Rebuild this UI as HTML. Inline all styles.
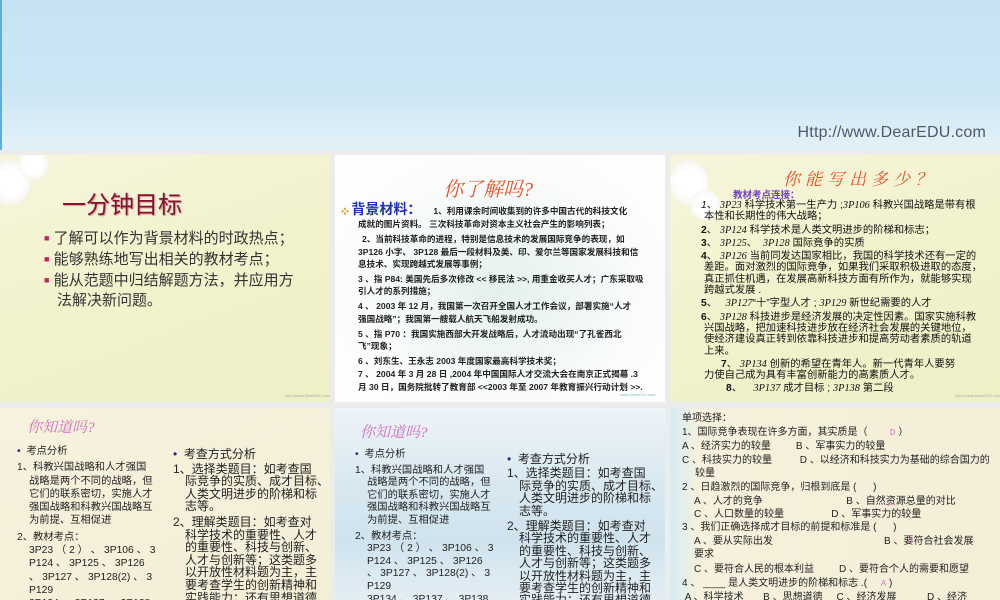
<!DOCTYPE html>
<html><head><meta charset="utf-8"><style>
*{margin:0;padding:0;box-sizing:border-box}
body{width:1000px;height:600px;overflow:hidden;background:#ececec;font-family:"Liberation Sans","Noto Sans CJK SC",sans-serif;position:relative}
.top{position:absolute;left:0;top:0;width:1000px;height:150px;background:linear-gradient(180deg,#c7e3f3 0%,#cce6f4 60%,#e3f1f9 100%);border-left:2px solid #5aaee0}
.url{position:absolute;right:14px;top:124px;font-size:16px;color:#4a5a6a;letter-spacing:0.2px}
.s{position:absolute;overflow:hidden}
.p{position:absolute;white-space:nowrap;color:#222}
.hand{font-family:"Liberation Serif","Noto Serif CJK SC",serif;font-style:italic}
.sm{font-size:4px;color:#aaa;position:absolute;font-style:italic}
.flower{position:absolute;border-radius:50%;background:radial-gradient(circle,#fff 40%,#f0efe6 100%)}
</style></head><body>
<div class="top"><div class="url">Http://www.DearEDU.com</div></div>

<!-- slide 1 -->
<div class="s" style="left:0;top:155px;width:330px;height:247px;background:linear-gradient(160deg,#f6f5dc 0%,#f2f2cc 50%,#eef0c6 100%)">
 <div class="flower" style="left:-10px;top:5px;width:40px;height:45px"></div>
 <div class="flower" style="left:18px;top:-5px;width:30px;height:30px"></div>
 <div class="p" style="left:62px;top:30px;font-size:24px;color:#8a1030;text-shadow:1px 1px 1px #c99">一分钟目标</div>
 <div class="p" style="left:44px;top:73px;font-size:15px;line-height:20px;color:#333">
  <div><span style="color:#c0285a;font-size:9px;vertical-align:2px">■</span> 了解可以作为背景材料的时政热点；</div>
  <div><span style="color:#c0285a;font-size:9px;vertical-align:2px">■</span> 能够熟练地写出相关的教材考点；</div>
  <div><span style="color:#c0285a;font-size:9px;vertical-align:2px">■</span> 能从范题中归结解题方法，并应用方</div>
  <div style="padding-left:13px">法解决新问题。</div>
 </div>
 <div class="sm" style="left:285px;top:238px">http://www.DearEDU.com</div>
</div>

<!-- slide 2 -->
<div class="s" style="left:335px;top:155px;width:330px;height:247px;background:radial-gradient(ellipse at 50% 55%,#e4f1ea 0%,#fafcfb 60%,#fff 100%)">
 <div class="p hand" style="left:108px;top:18px;font-size:20px;color:#e0552a">你了解吗?</div>
 <div class="p" style="left:6px;top:48px;font-size:8.6px;line-height:12.2px;font-weight:bold;color:#222">
  <div><span style="color:#d8a030;font-size:8px">❖</span> <span style="color:#2030b0;font-size:14px">背景材料：</span>&nbsp;&nbsp;&nbsp;&nbsp; 1、利用课余时间收集到的许多中国古代的科技文化</div>
  <div style="padding-left:17px">成就的图片资料。 三次科技革命对资本主义社会产生的影响列表；</div>
  <div style="padding-left:21px;margin-top:3px">2、当前科技革命的进程，特别是信息技术的发展国际竞争的表现，如</div>
  <div style="padding-left:17px">3P126 小字、 3P128 最后一段材料及美、印、爱尔兰等国家发展科技和信</div>
  <div style="padding-left:17px">息技术、实现跨越式发展等事例；</div>
  <div style="padding-left:17px;margin-top:3px">3 、指 P84: 美国先后多次修改 &lt;&lt; 移民法 &gt;&gt;, 用重金收买人才；广东采取吸</div>
  <div style="padding-left:17px">引人才的系列措施；</div>
  <div style="padding-left:17px;margin-top:3px">4 、 2003 年 12 月，我国第一次召开全国人才工作会议，部署实施“人才</div>
  <div style="padding-left:17px">强国战略”；我国第一艘载人航天飞船发射成功。</div>
  <div style="padding-left:17px;margin-top:3px">5 、指 P70 ：我国实施西部大开发战略后，人才流动出现“了孔雀西北</div>
  <div style="padding-left:17px">飞”现象；</div>
  <div style="padding-left:17px;margin-top:3px">6 、刘东生、王永志 2003 年度国家最高科学技术奖；</div>
  <div style="padding-left:17px;margin-top:1px">7 、 2004 年 3 月 28 日 ,2004 年中国国际人才交流大会在南京正式揭幕 .3</div>
  <div style="padding-left:17px">月 30 日，国务院批转了教育部 &lt;&lt;2003 年至 2007 年教育振兴行动计划 &gt;&gt;.</div>
 </div>
 <div class="sm" style="left:285px;top:237px;color:#8bb">www.DearEDU.com</div>
</div>

<!-- slide 3 -->
<div class="s" style="left:670px;top:155px;width:330px;height:247px;background:linear-gradient(160deg,#f6f5dc 0%,#f2f2cc 50%,#eef0c6 100%)">
 <div class="flower" style="left:0px;top:5px;width:38px;height:45px"></div>
 <div class="flower" style="left:20px;top:35px;width:30px;height:30px"></div>
 <div class="p hand" style="left:113px;top:10px;font-size:17px;color:#e0552a;letter-spacing:5px">你能写出多少？</div>
 <div class="p" style="left:63px;top:32px;font-size:9.5px;color:#7040c0;font-weight:bold">教材考点连接：</div>
 <div class="p" style="left:31px;top:45px;font-size:10.3px;line-height:11.3px;color:#111">
  <div><i>1</i>、 <i style="font-family:'Liberation Serif'">3P23</i> 科学技术第一生产力 ;<i style="font-family:'Liberation Serif'">3P106</i> 科教兴国战略是带有根</div>
  <div style="padding-left:3px">本性和长期性的伟大战略；</div>
  <div style="margin-top:2px"><b>2</b>、 <i style="font-family:'Liberation Serif'">3P124</i> 科学技术是人类文明进步的阶梯和标志；</div>
  <div style="margin-top:2px"><b>3</b>、 <i style="font-family:'Liberation Serif'">3P125</i>、&nbsp; <i style="font-family:'Liberation Serif'">3P128</i> 国际竟争的实质</div>
  <div style="margin-top:2px"><b>4</b>、 <i style="font-family:'Liberation Serif'">3P126</i> 当前同发达国家相比，我国的科学技术还有一定的</div>
  <div style="padding-left:3px">差距。面对激烈的国际竟争，如果我们采取积极进取的态度，</div>
  <div style="padding-left:3px">真正抓住机遇，在发展高新科技方面有所作为，就能够实现</div>
  <div style="padding-left:3px">跨越式发展 .</div>
  <div style="margin-top:2px"><b>5</b>、&nbsp;&nbsp; <i style="font-family:'Liberation Serif'">3P127</i>“十”字型人才 ; <i style="font-family:'Liberation Serif'">3P129</i> 新世纪需要的人才</div>
  <div style="margin-top:2px"><b>6</b>、 <i style="font-family:'Liberation Serif'">3P128</i> 科技进步是经济发展的决定性因素。国家实施科教</div>
  <div style="padding-left:3px">兴国战略，把加速科技进步放在经济社会发展的关键地位，</div>
  <div style="padding-left:3px">使经济建设真正转到依靠科技进步和提高劳动者素质的轨道</div>
  <div style="padding-left:3px">上来。</div>
  <div style="margin-top:2px;padding-left:20px"><b>7</b>、 <i style="font-family:'Liberation Serif'">3P134</i> 创新的希望在青年人。新一代青年人要努</div>
  <div style="padding-left:3px">力使自己成为具有丰富创新能力的高素质人才。</div>
  <div style="margin-top:2px;padding-left:25px"><b>8</b>、&nbsp;&nbsp;&nbsp; <i style="font-family:'Liberation Serif'">3P137</i> 成才目标 ; <i style="font-family:'Liberation Serif'">3P138</i> 第二段</div>
 </div>
 <div class="sm" style="left:285px;top:238px">http://www.DearEDU.com</div>
</div>

<!-- slide 4 -->
<div class="s" style="left:0;top:408px;width:330px;height:192px;background:linear-gradient(160deg,#f7f2de 0%,#f3eed6 100%)">
 <div class="p hand" style="left:27px;top:8px;font-size:15px;color:#d070c0">你知道吗?</div>
 <div class="p" style="left:17px;top:37px;font-size:10.3px;line-height:13.3px;color:#222">
  <div><span style="color:#302080">•</span>&nbsp; 考点分析</div>
  <div style="margin-top:3px">1、科教兴国战略和人才强国</div>
  <div style="padding-left:12px">战略是两个不同的战略，但</div>
  <div style="padding-left:12px">它们的联系密切，实施人才</div>
  <div style="padding-left:12px">强国战略和科教兴国战略互</div>
  <div style="padding-left:12px">为前提、互相促进</div>
  <div style="margin-top:3px">2、教材考点：</div>
  <div style="padding-left:12px">3P23 （ 2 ） 、 3P106 、 3</div>
  <div style="padding-left:12px">P124 、 3P125 、 3P126</div>
  <div style="padding-left:12px">、 3P127 、 3P128(2) 、 3</div>
  <div style="padding-left:12px">P129</div>
  <div style="padding-left:12px">3P134 、 3P137 、 3P138.</div>
 </div>
 <div class="p" style="left:173px;top:40px;font-size:12px;line-height:12.6px;color:#222">
  <div><span style="color:#302080">•</span>&nbsp; 考查方式分析</div>
  <div style="margin-top:2px">1、选择类题目：如考查国</div>
  <div style="padding-left:12px">际竞争的实质、成才目标、</div>
  <div style="padding-left:12px">人类文明进步的阶梯和标</div>
  <div style="padding-left:12px">志等。</div>
  <div style="margin-top:3px">2、理解类题目：如考查对</div>
  <div style="padding-left:12px">科学技术的重要性、人才</div>
  <div style="padding-left:12px">的重要性、科技与创新、</div>
  <div style="padding-left:12px">人才与创新等；这类题多</div>
  <div style="padding-left:12px">以开放性材料题为主，主</div>
  <div style="padding-left:12px">要考查学生的创新精神和</div>
  <div style="padding-left:12px">实践能力；还有思想道德</div>
  <div style="padding-left:12px">教育目标的渗透，例如选</div>
 </div>
</div>

<!-- slide 5 -->
<div class="s" style="left:335px;top:408px;width:330px;height:192px;background:linear-gradient(180deg,#eef4f8 0%,#d8e8f0 40%,#cfe3ee 70%,#e4eef4 100%)">
 <div class="p hand" style="left:25px;top:13px;font-size:15px;color:#d070c0">你知道吗?</div>
 <div class="p" style="left:20px;top:41px;font-size:10.3px;line-height:12.6px;color:#222">
  <div><span style="color:#302080">•</span>&nbsp; 考点分析</div>
  <div style="margin-top:3px">1、科教兴国战略和人才强国</div>
  <div style="padding-left:12px">战略是两个不同的战略，但</div>
  <div style="padding-left:12px">它们的联系密切，实施人才</div>
  <div style="padding-left:12px">强国战略和科教兴国战略互</div>
  <div style="padding-left:12px">为前提、互相促进</div>
  <div style="margin-top:3px">2、教材考点：</div>
  <div style="padding-left:12px">3P23 （ 2 ） 、 3P106 、 3</div>
  <div style="padding-left:12px">P124 、 3P125 、 3P126</div>
  <div style="padding-left:12px">、 3P127 、 3P128(2) 、 3</div>
  <div style="padding-left:12px">P129</div>
  <div style="padding-left:12px">3P134 、 3P137 、 3P138.</div>
 </div>
 <div class="p" style="left:172px;top:45px;font-size:12px;line-height:12.4px;color:#222">
  <div><span style="color:#302080">•</span>&nbsp; 考查方式分析</div>
  <div style="margin-top:2px">1、选择类题目：如考查国</div>
  <div style="padding-left:12px">际竞争的实质、成才目标、</div>
  <div style="padding-left:12px">人类文明进步的阶梯和标</div>
  <div style="padding-left:12px">志等。</div>
  <div style="margin-top:3px">2、理解类题目：如考查对</div>
  <div style="padding-left:12px">科学技术的重要性、人才</div>
  <div style="padding-left:12px">的重要性、科技与创新、</div>
  <div style="padding-left:12px">人才与创新等；这类题多</div>
  <div style="padding-left:12px">以开放性材料题为主，主</div>
  <div style="padding-left:12px">要考查学生的创新精神和</div>
  <div style="padding-left:12px">实践能力；还有思想道德</div>
  <div style="padding-left:12px">教育目标的渗透，例如选</div>
 </div>
</div>

<!-- slide 6 -->
<div class="s" style="left:670px;top:408px;width:330px;height:192px;background:linear-gradient(90deg,#d8ecf4 0px,#f6f1dc 30px,#f4eed8 100%)">
 <div class="p" style="left:12px;top:4px;font-size:10px;line-height:13.3px;color:#222">
  <div>单项选择：</div>
  <div style="margin-top:1px">1、国际竞争表现在许多方面，其实质是（ &nbsp;&nbsp;&nbsp;&nbsp;&nbsp;&nbsp; <span style="color:#e070c0;font-size:8px">D</span> ）</div>
  <div>A 、经济实力的较量 &nbsp;&nbsp;&nbsp;&nbsp;&nbsp;&nbsp;&nbsp; B 、军事实力的较量</div>
  <div style="margin-top:1px">C 、科技实力的较量 &nbsp;&nbsp;&nbsp;&nbsp;&nbsp;&nbsp;&nbsp;&nbsp; D 、以经济和科技实力为基础的综合国力的</div>
  <div style="padding-left:13px">较量</div>
  <div style="margin-top:1px">2 、日趋激烈的国际竞争，归根到底是 ( &nbsp;&nbsp;&nbsp;&nbsp; )</div>
  <div style="padding-left:12px">A 、人才的竞争 &nbsp;&nbsp;&nbsp;&nbsp;&nbsp;&nbsp;&nbsp;&nbsp;&nbsp;&nbsp;&nbsp;&nbsp;&nbsp;&nbsp;&nbsp;&nbsp;&nbsp;&nbsp;&nbsp;&nbsp;&nbsp;&nbsp;&nbsp;&nbsp;&nbsp;&nbsp;&nbsp;&nbsp; B 、自然资源总量的对比</div>
  <div style="padding-left:12px">C 、人口数量的较量 &nbsp;&nbsp;&nbsp;&nbsp;&nbsp;&nbsp;&nbsp;&nbsp;&nbsp;&nbsp;&nbsp;&nbsp;&nbsp;&nbsp;&nbsp; D 、军事实力的较量</div>
  <div>3 、我们正确选择成才目标的前提和标准是 ( &nbsp;&nbsp;&nbsp;&nbsp; )</div>
  <div style="padding-left:12px">A 、要从实际出发 &nbsp;&nbsp;&nbsp;&nbsp;&nbsp;&nbsp;&nbsp;&nbsp;&nbsp;&nbsp;&nbsp;&nbsp;&nbsp;&nbsp;&nbsp;&nbsp;&nbsp;&nbsp;&nbsp;&nbsp;&nbsp;&nbsp;&nbsp;&nbsp;&nbsp;&nbsp;&nbsp;&nbsp;&nbsp;&nbsp;&nbsp;&nbsp;&nbsp;&nbsp;&nbsp;&nbsp;&nbsp;&nbsp; B 、要符合社会发展</div>
  <div style="padding-left:12px">要求</div>
  <div style="padding-left:12px;margin-top:2px">C 、要符合人民的根本利益 &nbsp;&nbsp;&nbsp;&nbsp;&nbsp;&nbsp;&nbsp; D 、要符合个人的需要和愿望</div>
  <div>4 、 ____ 是人类文明进步的阶梯和标志 .( &nbsp;&nbsp;&nbsp; <span style="color:#e070c0;font-size:8px">A</span> )</div>
  <div style="margin-top:1px">&nbsp;A 、科学技术 &nbsp;&nbsp;&nbsp;&nbsp;&nbsp; B 、思想道德 &nbsp;&nbsp;&nbsp; C 、经济发展 &nbsp;&nbsp;&nbsp;&nbsp;&nbsp;&nbsp;&nbsp;&nbsp;&nbsp; D 、经济</div>
  <div style="padding-left:13px">制度</div>
 </div>
 <div class="p" style="left:218px;top:93px;font-size:7px;color:#e070c0">A</div>
 <div class="p" style="left:238px;top:130px;font-size:7px;color:#e070c0">C</div>
</div>
</body></html>
